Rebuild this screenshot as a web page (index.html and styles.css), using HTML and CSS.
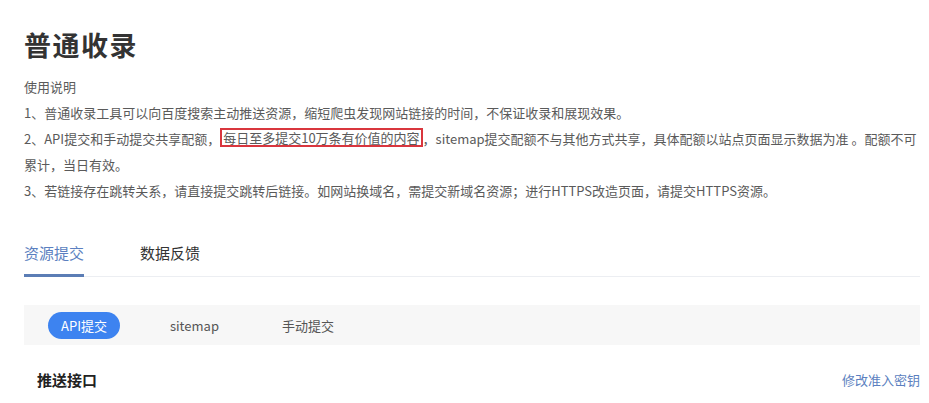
FILE: index.html
```html
<!DOCTYPE html>
<html lang="zh-CN">
<head>
<meta charset="utf-8">
<title>普通收录</title>
<link rel="stylesheet" href="styles.css">
</head>
<body>
<div class="page">
  <h1 class="title">普通收录</h1>
  <div class="notes">
    <p>使用说明</p>
    <p>1、普通收录工具可以向百度搜索主动推送资源，缩短爬虫发现网站链接的时间，不保证收录和展现效果。</p>
    <p>2、API提交和手动提交共享配额，<span class="mark">每日至多提交10万条有价值的内容</span>，sitemap提交配额不与其他方式共享，具体配额以站点页面显示数据为准 。配额不可累计，当日有效。</p>
    <p>3、若链接存在跳转关系，请直接提交跳转后链接。如网站换域名，需提交新域名资源；进行HTTPS改造页面，请提交HTTPS资源。</p>
  </div>
  <div class="tabs">
    <span class="tab active">资源提交</span>
    <span class="tab">数据反馈</span>
  </div>
  <div class="subbar">
    <span class="pill active">API提交</span>
    <span class="pill">sitemap</span>
    <span class="pill">手动提交</span>
  </div>
  <div class="section-head">
    <span class="section-title">推送接口</span>
    <a class="link">修改准入密钥</a>
  </div>
</div>
</body>
</html>
```

FILE: styles.css
```css
* { box-sizing: border-box; }
html, body { margin: 0; padding: 0; background: #fff; }
body {
  font-family: "Noto Sans CJK SC", "Noto Sans", sans-serif;
  color: #5a5a5a;
}
.page {
  width: 896px;
  margin-left: 24px;
  padding-top: 28px;
}
.title {
  margin: 0;
  font-size: 27px;
  line-height: 34px;
  font-weight: 700;
  color: #333;
  letter-spacing: 1.5px;
}
.notes {
  margin-top: 12px;
  font-size: 13px;
  line-height: 26px;
  color: #5a5a5a;
}
.notes p { margin: 0; }
.mark {
  display: inline-block;
  line-height: 15px;
  border: 2px solid #d9363e;
  padding: 0 1px;
  vertical-align: 1px;
}
.tabs {
  margin-top: 38px;
  display: flex;
  gap: 56px;
  border-bottom: 1px solid #eceef2;
}
.tab {
  font-size: 15px;
  line-height: 22px;
  padding-bottom: 10px;
  color: #333;
  border-bottom: 3px solid transparent;
  margin-bottom: -1px;
}
.tab.active {
  color: #5b7fc0;
  border-bottom-color: #5b7db5;
}
.subbar {
  margin-top: 28px;
  height: 40px;
  background: #f7f7f7;
  display: flex;
  align-items: center;
  padding-left: 24px;
}
.pill {
  font-size: 13px;
  line-height: 27px;
  height: 27px;
  padding: 0 13px;
  border-radius: 14px;
  color: #555;
  margin-right: 37px;
}
.pill.active {
  background: #3d83f0;
  color: #fff;
}
.section-head {
  margin-top: 24px;
  display: flex;
  justify-content: space-between;
  align-items: center;
  padding-left: 13px;
}
.section-title {
  font-size: 15px;
  font-weight: 700;
  color: #222;
  line-height: 22px;
}
.link {
  font-size: 13px;
  color: #5b7fc0;
  line-height: 22px;
}
```
